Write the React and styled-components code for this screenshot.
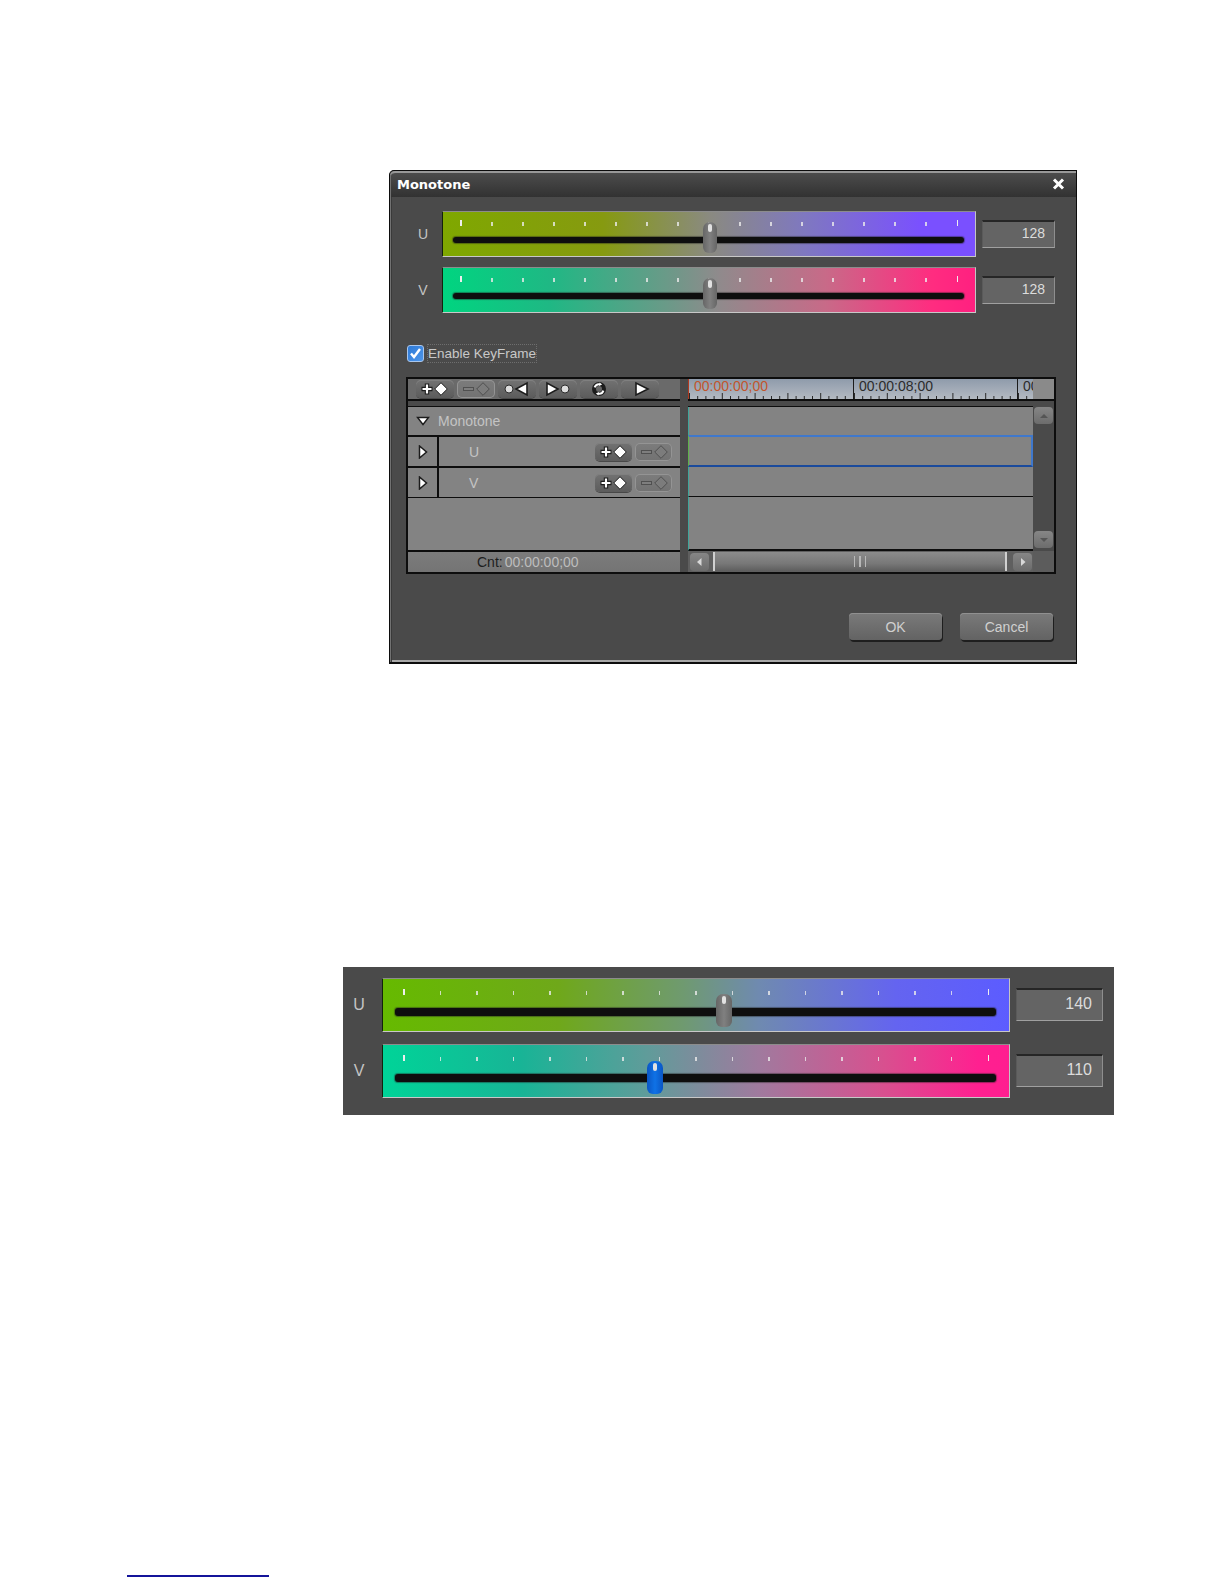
import React from 'react';
import styled, { createGlobalStyle } from 'styled-components';

const Global = createGlobalStyle`
  html, body {
    margin: 0;
    background: #fff;
    font-family: 'Liberation Sans', Arial, sans-serif;
  }
`;

const Page = styled.div`
  display: flex;
  flex-direction: column;
  align-items: flex-start;
  padding-top: 170px;
  height: 1584px;
  box-sizing: border-box;
  overflow: hidden;
`;

const Dialog = styled.section`
  box-sizing: border-box;
  width: 688px;
  height: 494px;
  margin-left: 389px;
  background: #4a4a4a;
  border: 1px solid #0c0c0c;
  border-bottom-width: 2px;
  border-top-left-radius: 5px;
  box-shadow: inset 1px 0 #727272, inset 2px 0 #3a3a3a, inset 0 -2px #a8a8a8;
`;

const TitleBar = styled.header`
  display: flex;
  align-items: center;
  justify-content: space-between;
  height: 26px;
  padding: 0 11px 2px 7px;
  border-top: 2px solid #999;
  border-top-left-radius: 5px;
  background: linear-gradient(#4c4c4c, #323232);
  box-shadow: inset 1px 0 #727272;
  box-sizing: border-box;
  color: #fff;
  font: bold 13px 'DejaVu Sans', sans-serif;
`;

const SliderRows = styled.div`
  display: flex;
  flex-direction: column;
  gap: ${(p) => (p.$big ? 12 : 10)}px;
  padding: ${(p) => (p.$big ? '11px 0 0 9px' : '14px 0 0 26px')};
`;

const Row = styled.div`
  display: flex;
  align-items: center;
`;

const RowLabel = styled.span`
  width: 14px;
  margin-right: ${(p) => (p.$big ? 16 : 12)}px;
  text-align: center;
  color: #c4c4c4;
  font-size: ${(p) => (p.$big ? 16 : 14)}px;
`;

const Slider = styled.div`
  position: relative;
  box-sizing: border-box;
  width: ${(p) => (p.$big ? 628 : 534)}px;
  height: ${(p) => (p.$big ? 54 : 46)}px;
  background: linear-gradient(90deg, ${(p) => p.$stops});
  border-style: solid;
  border-width: 1px 1.5px 1.5px 1.5px;
  border-color: #8c8c8c #c4c4c4 #c8c8c8 #14220c;
`;

const Ticks = styled.div`
  display: flex;
  justify-content: space-between;
  margin-top: ${(p) => (p.$big ? 10 : 8)}px;
  padding: 0 ${(p) => (p.$big ? 20 : 17)}px;
`;

const Tick = styled.i`
  display: block;
  width: 1.5px;
  height: 4px;
  margin-top: 2px;
  background: rgba(235, 235, 235, 0.8);
  &:first-child,
  &:last-child {
    height: 6px;
    margin-top: 0;
    background: #eee;
  }
`;

const Track = styled.div`
  height: ${(p) => (p.$big ? 8 : 6)}px;
  margin: ${(p) => (p.$big ? '13px 13px 0 12px' : '11px 11px 0 10px')};
  border-radius: 3px;
  background: #0e0e0e;
  box-shadow: 0 0 1px 1px rgba(30, 30, 30, 0.45);
`;

const Thumb = styled.div`
  position: absolute;
  top: ${(p) => p.$top}px;
  left: ${(p) => p.$left}px;
  width: ${(p) => (p.$big ? 16 : 14)}px;
  height: ${(p) => (p.$big ? 33 : 31)}px;
  border-radius: 7px 7px 6px 6px;
  background: ${(p) => (p.$blue ? 'linear-gradient(90deg, #0a56c4, #0f72e6 50%, #0a56c4)' : 'linear-gradient(90deg, #666, #808080 50%, #666)')};
  &::after {
    content: '';
    position: absolute;
    top: 2px;
    left: calc(50% - 2px);
    width: 4px;
    height: 8px;
    border-radius: 2px;
    background: #e2e2e2;
  }
`;

const ValueBox = styled.div`
  box-sizing: border-box;
  width: ${(p) => (p.$big ? 87 : 73)}px;
  height: ${(p) => (p.$big ? 33 : 28)}px;
  margin: ${(p) => (p.$big ? '-2px 0 0 6px' : '0 0 0 6px')};
  padding-right: ${(p) => (p.$big ? 10 : 9)}px;
  text-align: right;
  line-height: ${(p) => (p.$big ? 27 : 22)}px;
  font-size: ${(p) => (p.$big ? 16 : 14)}px;
  color: #dcdcdc;
  background: #646464;
  border-style: solid;
  border-width: 1px;
  border-color: #262626 #8e8e8e #a0a0a0 #5a5a5a;
  border-top-width: 2px;
`;

const EnableRow = styled.label`
  display: flex;
  align-items: center;
  gap: 3px;
  height: 20px;
  margin: 30px 0 14px 17px;
  color: #c8c8c8;
  font-size: 13.5px;
`;

const CheckBox = styled.span`
  display: flex;
  box-sizing: border-box;
  width: 17px;
  height: 17px;
  border: 1px solid #a9c6ec;
  border-radius: 3px;
  background: linear-gradient(135deg, #2f7ad6, #4c95ea);
`;

const FocusText = styled.span`
  margin-top: 1px;
  padding: 1px 0;
  border: 1px dotted #6e6e6e;
`;

const Frame = styled.div`
  display: grid;
  grid-template-columns: 272px 1fr;
  column-gap: 8px;
  box-sizing: border-box;
  width: 650px;
  height: 197px;
  margin-left: 16px;
  border: 2px solid #0d0d0d;
  background: #4a4a4a;
`;

const Column = styled.div`
  display: flex;
  flex-direction: column;
  min-width: 0;
`;

const Toolbar = styled.div`
  display: flex;
  gap: 3px;
  align-items: center;
  height: 20px;
  padding-left: 8px;
  background: #6a6a6a;
  border-bottom: 2px solid #0d0d0d;
  box-sizing: content-box;
`;

const KeyButton = styled.button`
  display: block;
  width: ${(p) => (p.$small ? 37 : 38)}px;
  height: 18px;
  padding: 0;
  border: 0;
  border-radius: 5px;
  background: ${(p) => (p.$off ? 'linear-gradient(#7c7c7c, #727272)' : 'linear-gradient(#727272, #5c5c5c)')};
  box-shadow: ${(p) => (p.$off ? 'inset 0 0 0 1px #949494' : 'inset 0 1px #808080, 0 1px #484848')};
`;

const Spacer = styled.div`
  flex: none;
  height: 5px;
`;

const TreeRow = styled.div`
  display: flex;
  align-items: center;
  flex: none;
  box-sizing: content-box;
  height: ${(p) => p.$h}px;
  background: #838383;
  border-top: ${(p) => (p.$first ? '1px solid #0d0d0d' : '0')};
  border-bottom: ${(p) => p.$line || 2}px solid #0d0d0d;
  color: #c4c4c4;
  font-size: 14px;
`;

const Caret = styled.span`
  display: flex;
  justify-content: center;
  flex: none;
  box-sizing: border-box;
  width: ${(p) => p.$w}px;
  align-self: stretch;
  align-items: center;
  border-right: ${(p) => (p.$divider ? '2px solid #0d0d0d' : '0')};
`;

const ChannelName = styled.span`
  flex: 1;
  padding-left: 30px;
`;

const RowButtons = styled.div`
  display: flex;
  gap: 3px;
  padding-right: 8px;
`;

const CountRow = styled.div`
  display: flex;
  align-items: center;
  flex: 1;
  padding-left: 69px;
  background: linear-gradient(#7c7c7c, #747474);
  color: #1e1e1e;
  font-size: 14px;
`;

const CountTime = styled.span`
  margin-left: 2px;
  color: #bdbdbd;
`;

const RulerRow = styled.div`
  display: flex;
  height: 20px;
  box-sizing: content-box;
  border-bottom: 2px solid #0d0d0d;
`;

const Ruler = styled.div`
  display: flex;
  flex: 1;
  overflow: hidden;
  background: linear-gradient(#8f9bab, #b4bac2);
  border-left: 1px solid #b03a20;
`;

const RulerCell = styled.div`
  position: relative;
  flex: none;
  box-sizing: border-box;
  width: 164px;
  padding-left: 5px;
  line-height: 15px;
  font-size: 14px;
  color: ${(p) => (p.$now ? '#c2552c' : '#2c2c2c')};
  & + & {
    border-left: 1px solid #1c1c1c;
  }
`;

const RulerMarks = styled.svg`
  position: absolute;
  left: 0;
  bottom: 0;
  width: 164px;
  height: 6px;
`;

const RulerCorner = styled.div`
  flex: none;
  width: 21px;
  background: #8a8a8a;
`;

const TimelineBody = styled.div`
  display: flex;
  flex: none;
`;

const Tracks = styled.div`
  flex: 1;
  border-top: 1px solid #0d0d0d;
`;

const TrackRow = styled.div`
  box-sizing: content-box;
  height: ${(p) => p.$h}px;
  background: #838383;
  border-left: 1px solid ${(p) => (p.$selected ? '#5fb24a' : '#3fa59a')};
  border-bottom: ${(p) => p.$line || 1}px solid #0d0d0d;
  ${(p) => p.$selected && `
    border-top: 2px solid #3f78cc;
    border-right: 2px solid #3f78cc;
    border-bottom: 2px solid #1a4a9c;
    margin-top: -2px;
  `}
`;

const VScroll = styled.div`
  display: flex;
  flex: none;
  flex-direction: column;
  justify-content: space-between;
  box-sizing: border-box;
  width: 21px;
  padding: 1px 1px 3px;
  background: #4a4a4a;
`;

const ScrollButton = styled.div`
  display: flex;
  align-items: center;
  justify-content: center;
  flex: none;
  box-sizing: border-box;
  width: 19px;
  height: ${(p) => (p.$h ? 18 : 17)}px;
  border-radius: 4px;
  background: linear-gradient(#868686, #6c6c6c);
`;

const HScroll = styled.div`
  display: flex;
  flex: 1;
`;

const HScrollLane = styled.div`
  display: flex;
  align-items: center;
  flex: 1;
  gap: 4px;
  padding: 0 1px 0 2px;
  background: #5f5f5f;
`;

const HThumb = styled.div`
  display: flex;
  align-items: center;
  justify-content: center;
  gap: 4px;
  flex: none;
  box-sizing: border-box;
  width: 294px;
  height: 19px;
  margin-right: 2px;
  border-left: 2px solid #d0d0d0;
  border-right: 2px solid #d0d0d0;
  background: linear-gradient(#8c8c8c, #787878 60%, #5e5e5e);
`;

const Grip = styled.i`
  display: block;
  width: 1.5px;
  height: 11px;
  background: #b8b8b8;
`;

const HCorner = styled.div`
  flex: none;
  width: 21px;
  background: #5c5c5c;
`;

const Footer = styled.div`
  display: flex;
  justify-content: flex-end;
  gap: 18px;
  margin-top: 39px;
  padding-right: 23px;
`;

const DialogButton = styled.button`
  width: 93px;
  height: 27px;
  padding: 0;
  border: 0;
  border-radius: 4px;
  background: linear-gradient(#7a7a7a, #636363);
  box-shadow: inset 0 1px #909090, 1px 2px #1e1e1e;
  color: #d0d0d0;
  font: 14px 'Liberation Sans', Arial, sans-serif;
`;

const Panel = styled.section`
  box-sizing: border-box;
  width: 771px;
  height: 148px;
  margin: 303px 0 0 343px;
  background: #4a4a4a;
`;

const PageLink = styled.div`
  width: 142px;
  height: 1.5px;
  margin: 460px 0 0 127px;
  background: #14149a;
`;

const Svg = (p) => <svg width={p.w || 38} height={p.h || 18} viewBox={`0 0 ${p.w || 38} ${p.h || 18}`} style={{ display: 'block', flex: 'none' }}>{p.children}</svg>;

const Diamond = ({ cx, off }) => (
  <polygon
    points={`${cx},2.7 ${cx + 6.3},9 ${cx},15.3 ${cx - 6.3},9`}
    fill={off ? '#7c7c7c' : '#fff'}
    stroke={off ? '#505050' : '#1c1c1c'}
  />
);

const AddKey = () => (
  <Svg>
    <path d="M11 3.5v11M5.5 9h11" stroke="#1c1c1c" strokeWidth="4.4" />
    <path d="M11 4.5v9M6.5 9h9" stroke="#fff" strokeWidth="2.2" />
    <Diamond cx={25} />
  </Svg>
);

const RemoveKey = () => (
  <Svg>
    <path d="M6 9h11" stroke="#505050" strokeWidth="4" />
    <path d="M7 9h9" stroke="#8a8a8a" strokeWidth="1.6" />
    <Diamond cx={26} off />
  </Svg>
);

const Triangle = ({ points }) => <polygon points={points} fill="#fff" stroke="#1c1c1c" strokeWidth="1.6" />;

const PrevKey = () => (
  <Svg>
    <circle cx="11" cy="9" r="4" fill="#ddd" stroke="#2c2c2c" />
    <Triangle points="18,9 29,3 29,15" />
  </Svg>
);

const NextKey = () => (
  <Svg>
    <Triangle points="8,3 8,15 19,9" />
    <circle cx="26" cy="9" r="4" fill="#ddd" stroke="#2c2c2c" />
  </Svg>
);

const LoopKey = () => (
  <Svg>
    <circle cx="19" cy="9" r="5" fill="none" stroke="#1c1c1c" strokeWidth="4" />
    <path d="M14.6 7.4a4.8 4.8 0 0 1 5.6-3M23.4 10.6a4.8 4.8 0 0 1-5.6 3" fill="none" stroke="#fff" strokeWidth="2" />
    <path d="M19.5 2.4l2.6 2.2-3 1.4zM18.5 15.6l-2.6-2.2 3-1.4z" fill="#fff" />
  </Svg>
);

const PlayKey = () => (
  <Svg>
    <Triangle points="15,3 15,15 27,9" />
  </Svg>
);

const CaretDown = () => (
  <Svg w={14} h={10}>
    <polygon points="1.5,1.5 12.5,1.5 7,8.5" fill="#fff" stroke="#1c1c1c" strokeWidth="1.4" />
  </Svg>
);

const CaretRight = () => (
  <Svg w={10} h={14}>
    <polygon points="1.5,1 1.5,13 8.5,7" fill="#fff" stroke="#1c1c1c" strokeWidth="1.5" />
  </Svg>
);

const ScrollArrow = ({ points, light }) => (
  <Svg w={10} h={10}>
    <polygon points={points} fill={light ? '#d8d8d8' : '#555'} />
  </Svg>
);

const CloseIcon = () => (
  <Svg w={13} h={12}>
    <path d="M2 1.5l9 9M11 1.5l-9 9" stroke="#fff" strokeWidth="3" />
  </Svg>
);

const CheckIcon = () => (
  <svg width="15" height="15" viewBox="0 0 15 15">
    <path d="M3 7.5l3 3.5 6-8" fill="none" stroke="#fff" strokeWidth="2.4" />
  </svg>
);

const Marks = () => {
  const ticks = [];
  for (let i = 0; i < 20; i++) {
    const x = i * 8.2 + 0.5;
    const h = i % 4 === 0 ? 6 : 3;
    ticks.push(<line key={i} x1={x} x2={x} y1={6 - h} y2={6} stroke="#2a2a2a" />);
  }
  return <RulerMarks viewBox="0 0 164 6">{ticks}</RulerMarks>;
};

const ColorSlider = ({ label, value, stops, thumb, top, big, blue }) => (
  <Row>
    <RowLabel $big={big}>{label}</RowLabel>
    <Slider $big={big} $stops={stops}>
      <Ticks $big={big}>
        {Array.from({ length: 17 }, (_, i) => <Tick key={i} />)}
      </Ticks>
      <Track $big={big} />
      <Thumb $big={big} $blue={blue} $left={thumb} $top={top} />
    </Slider>
    <ValueBox $big={big}>{value}</ValueBox>
  </Row>
);

const U_SMALL = '#7fa800 0%, #869a10 30%, #8a8a80 50%, #7f78c0 68%, #7a50ff 90%, #7a50ff 100%';
const V_SMALL = '#00d580 0%, #1fb884 20%, #6a9a88 42%, #908a8c 52%, #c86a88 72%, #ff2c80 92%, #ff2080 100%';
const U_BIG = '#66ba00 0%, #6fa81a 28%, #6f9a70 48%, #6f8ab0 60%, #6464f0 82%, #5c5cff 100%';
const V_BIG = '#00d498 0%, #18b496 22%, #5f9c9a 42%, #a07a9e 60%, #d8508f 80%, #ff2090 95%, #ff1e90 100%';

export default function App() {
  return (
    <Page>
      <Global />
      <Dialog>
        <TitleBar>
          <span>Monotone</span>
          <CloseIcon />
        </TitleBar>
        <SliderRows>
          <ColorSlider label="U" value="128" stops={U_SMALL} thumb={260} top={10} />
          <ColorSlider label="V" value="128" stops={V_SMALL} thumb={260} top={10} />
        </SliderRows>
        <EnableRow>
          <CheckBox><CheckIcon /></CheckBox>
          <FocusText>Enable KeyFrame</FocusText>
        </EnableRow>
        <Frame>
          <Column>
            <Toolbar>
              <KeyButton><AddKey /></KeyButton>
              <KeyButton $off><RemoveKey /></KeyButton>
              <KeyButton><PrevKey /></KeyButton>
              <KeyButton><NextKey /></KeyButton>
              <KeyButton><LoopKey /></KeyButton>
              <KeyButton><PlayKey /></KeyButton>
            </Toolbar>
            <Spacer />
            <TreeRow $first $h={28}>
              <Caret $w={30}><CaretDown /></Caret>
              Monotone
            </TreeRow>
            <TreeRow $h={29}>
              <Caret $w={31} $divider><CaretRight /></Caret>
              <ChannelName>U</ChannelName>
              <RowButtons>
                <KeyButton $small><AddKey /></KeyButton>
                <KeyButton $small $off><RemoveKey /></KeyButton>
              </RowButtons>
            </TreeRow>
            <TreeRow $h={29} $line={1}>
              <Caret $w={31} $divider><CaretRight /></Caret>
              <ChannelName>V</ChannelName>
              <RowButtons>
                <KeyButton $small><AddKey /></KeyButton>
                <KeyButton $small $off><RemoveKey /></KeyButton>
              </RowButtons>
            </TreeRow>
            <TreeRow $h={52} />
            <CountRow>Cnt:<CountTime>00:00:00;00</CountTime></CountRow>
          </Column>
          <Column>
            <RulerRow>
              <Ruler>
                <RulerCell $now>00:00:00;00<Marks /></RulerCell>
                <RulerCell>00:00:08;00<Marks /></RulerCell>
                <RulerCell>00:00:16;00<Marks /></RulerCell>
              </Ruler>
              <RulerCorner />
            </RulerRow>
            <Spacer />
            <TimelineBody>
              <Tracks>
                <TrackRow $h={28} $line={2} />
                <TrackRow $h={28} $selected />
                <TrackRow $h={29} />
                <TrackRow $h={52} $line={2} />
              </Tracks>
              <VScroll>
                <ScrollButton><ScrollArrow points="1,7 9,7 5,3" /></ScrollButton>
                <ScrollButton><ScrollArrow points="1,3 9,3 5,7" /></ScrollButton>
              </VScroll>
            </TimelineBody>
            <HScroll>
              <HScrollLane>
                <ScrollButton $h><ScrollArrow light points="6.5,1 6.5,9 2,5" /></ScrollButton>
                <HThumb><Grip /><Grip /><Grip /></HThumb>
                <ScrollButton $h><ScrollArrow light points="3,1 3,9 7.5,5" /></ScrollButton>
              </HScrollLane>
              <HCorner />
            </HScroll>
          </Column>
        </Frame>
        <Footer>
          <DialogButton>OK</DialogButton>
          <DialogButton>Cancel</DialogButton>
        </Footer>
      </Dialog>
      <Panel>
        <SliderRows $big>
          <ColorSlider big label="U" value="140" stops={U_BIG} thumb={333} top={15} />
          <ColorSlider big blue label="V" value="110" stops={V_BIG} thumb={264} top={16} />
        </SliderRows>
      </Panel>
      <PageLink />
    </Page>
  );
}
